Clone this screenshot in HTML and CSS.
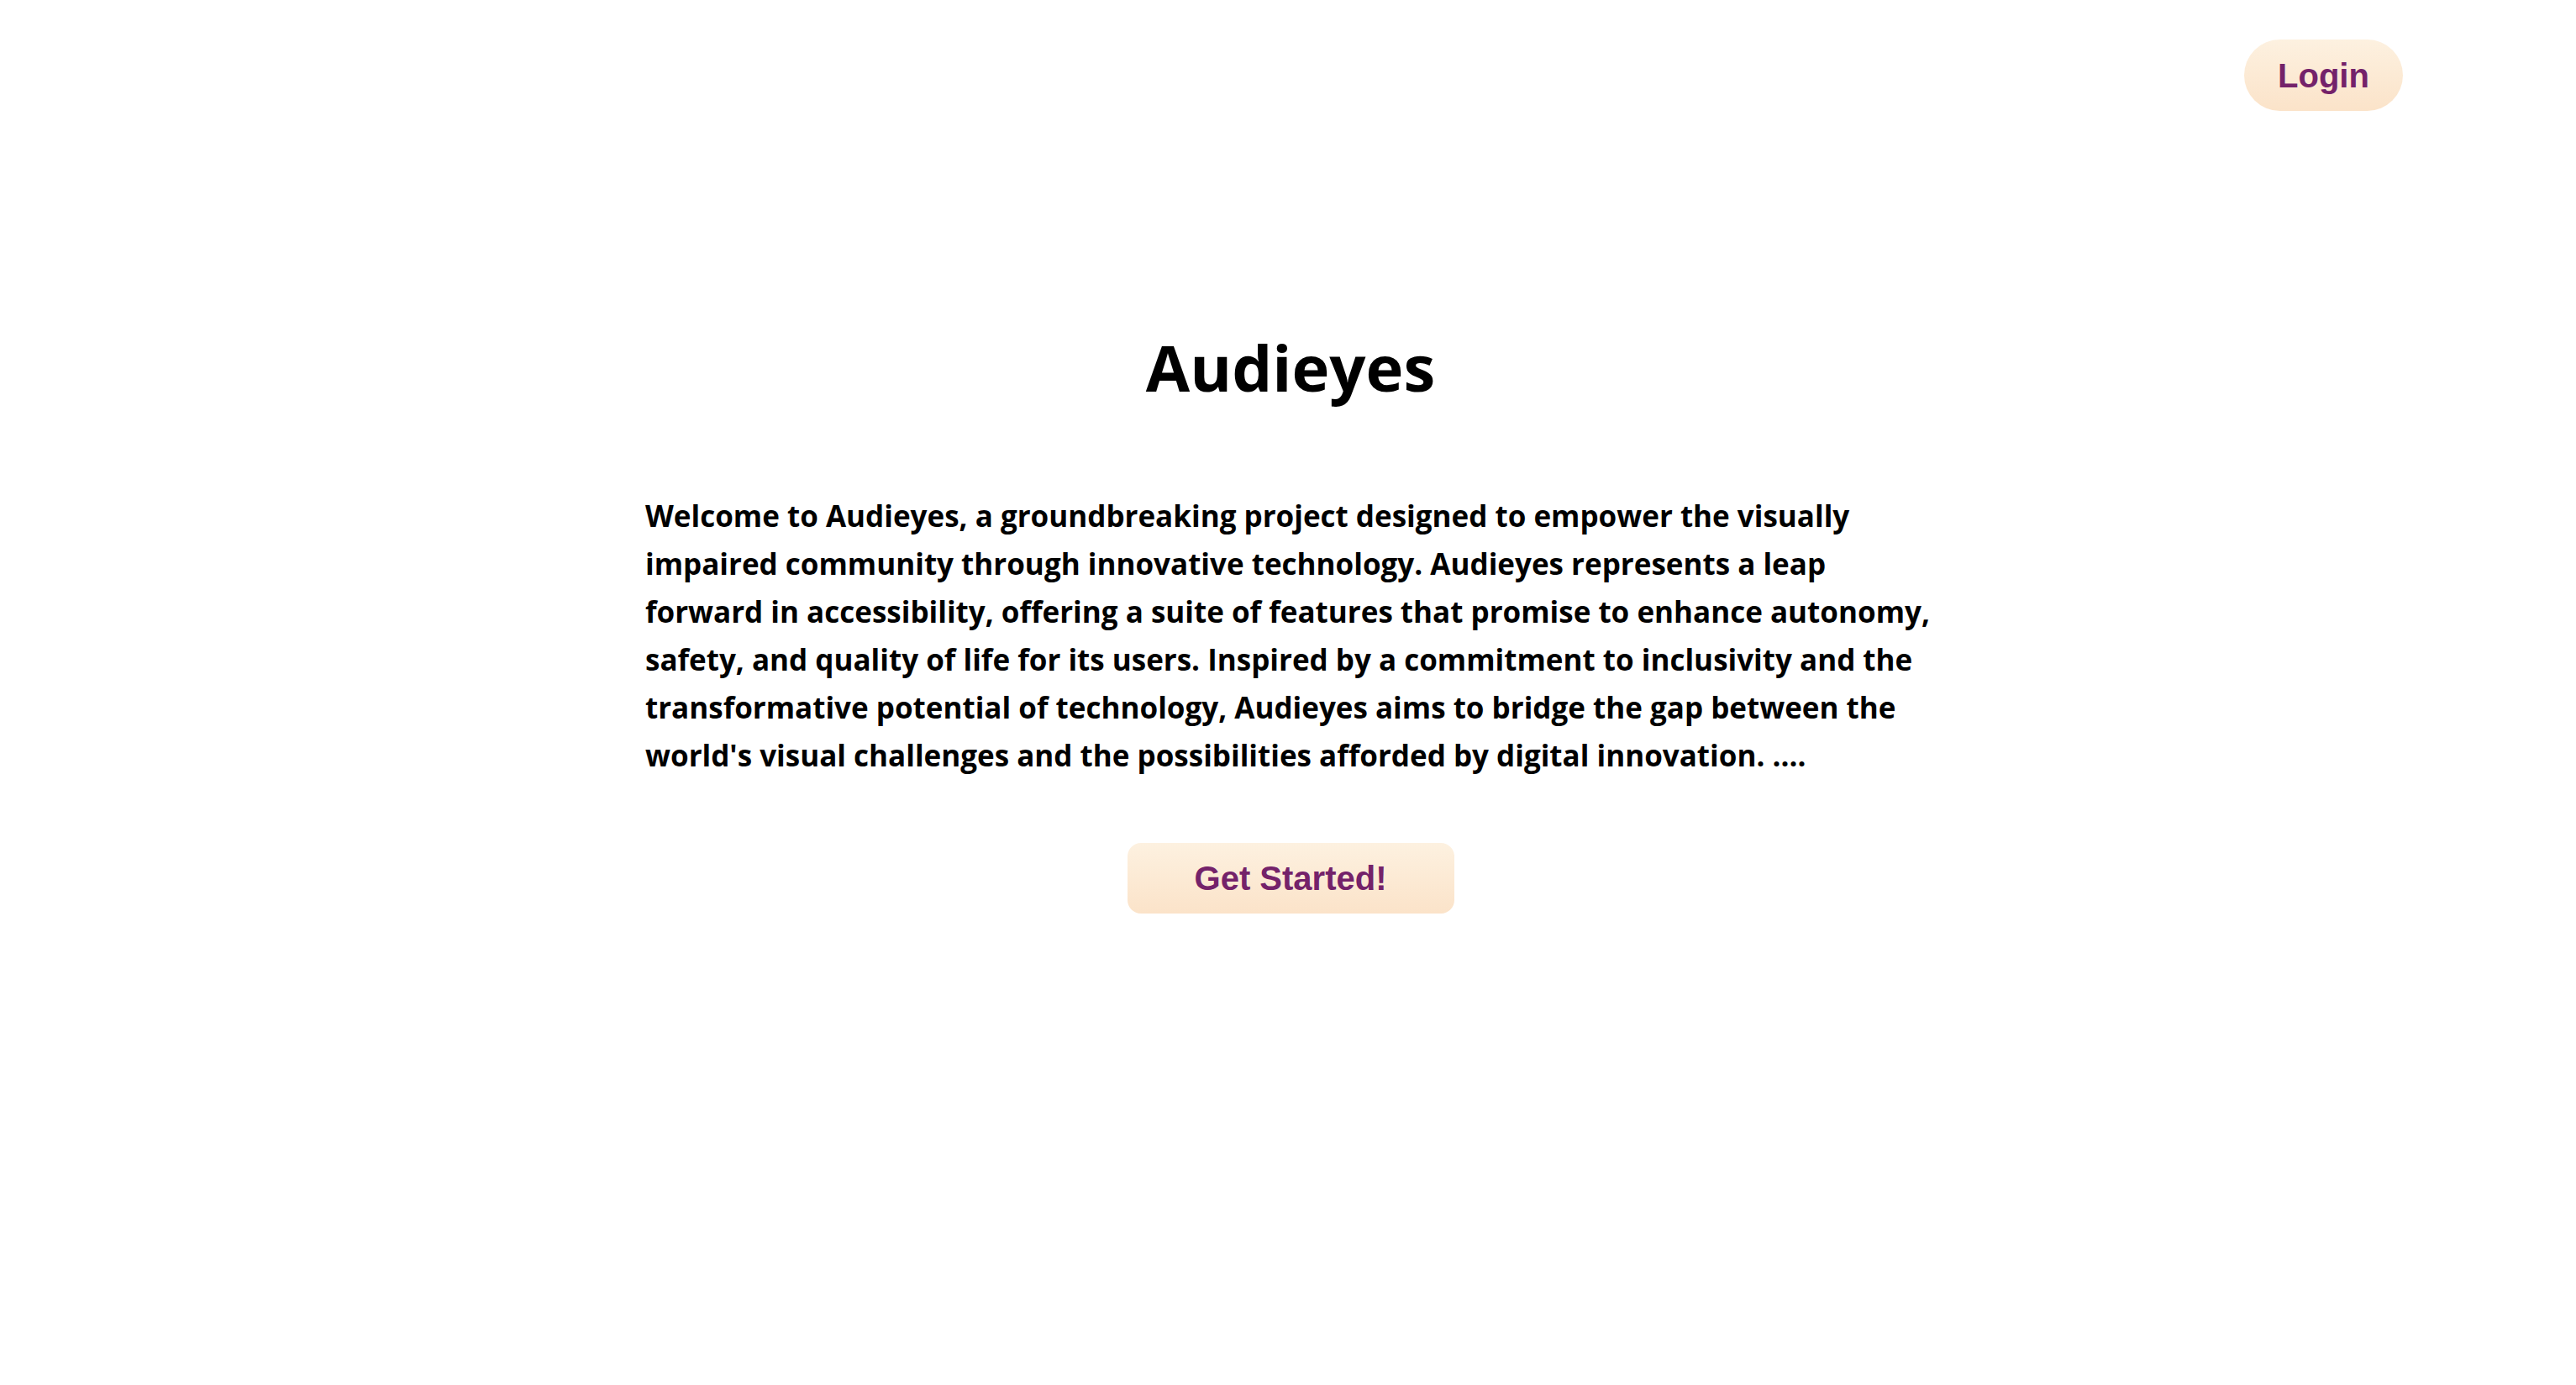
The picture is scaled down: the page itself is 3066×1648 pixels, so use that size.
FILE: index.html
```html
<!DOCTYPE html>
<html lang="en">
<head>
<meta charset="utf-8">
<title>Audieyes</title>
<link rel="stylesheet" href="styles.css">
</head>
<body>
<header class="topbar">
  <button class="pill-btn">Login</button>
</header>
<main class="hero">
  <h1 class="hero-title">Audieyes</h1>
  <p class="hero-text">Welcome to Audieyes, a groundbreaking project designed to empower the visually impaired community through innovative technology. Audieyes represents a leap forward in accessibility, offering a suite of features that promise to enhance autonomy, safety, and quality of life for its users. Inspired by a commitment to inclusivity and the transformative potential of technology, Audieyes aims to bridge the gap between the world's visual challenges and the possibilities afforded by digital innovation. ....</p>
  <button class="cta-btn">Get Started!</button>
</main>
</body>
</html>
```

FILE: styles.css
```css
html, body {
  margin: 0;
  padding: 0;
  background: #ffffff;
}

body {
  font-family: "Open Sans", "Noto Sans", sans-serif;
  color: #000;
}

.topbar {
  display: flex;
  justify-content: flex-end;
  padding: 47px 206px 0 0;
}

.pill-btn,
.cta-btn {
  font-family: "Liberation Sans", Arial, sans-serif;
  font-weight: 700;
  font-size: 40px;
  color: #74226a;
  border: none;
  background: linear-gradient(180deg, #fdf1e0 0%, #fbe3c9 100%);
  cursor: pointer;
  line-height: 1;
}

.pill-btn {
  width: 189px;
  height: 85px;
  border-radius: 43px;
  padding: 0;
}

.hero {
  display: flex;
  flex-direction: column;
  align-items: center;
  padding-left: 6px;
}

.hero-title {
  font-size: 76px;
  font-weight: 700;
  margin: 259px 0 0;
  line-height: 1.2;
}

.hero-text {
  width: 1536px;
  margin: 103px 0 0;
  font-size: 35px;
  font-weight: 700;
  line-height: 57px;
  text-align: left;
}

.cta-btn {
  width: 389px;
  height: 84px;
  border-radius: 16px;
  padding: 0;
  margin-top: 76px;
}
```
